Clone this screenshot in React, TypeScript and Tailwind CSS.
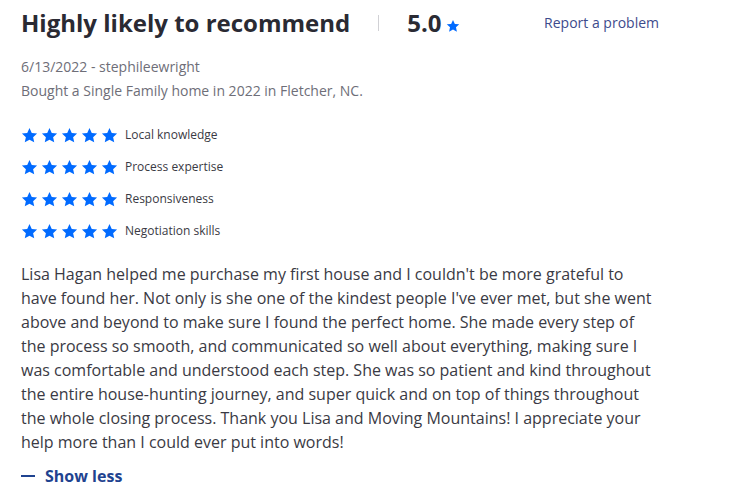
import React from "react";

const Star = ({ className }: { className: string }) => (
  <svg viewBox="0 0 24 24" className={className} fill="currentColor">
    <path d="M12 1.5l3.2 6.9 7.5.8-5.6 5.1 1.6 7.4L12 17.9l-6.7 3.8 1.6-7.4-5.6-5.1 7.5-.8z" />
  </svg>
);

const ratings = [
  "Local knowledge",
  "Process expertise",
  "Responsiveness",
  "Negotiation skills",
];

export default function App() {
  return (
    <div className="w-[754px] h-[494px] bg-white font-['Open_Sans',sans-serif] pl-[21px] pr-[20px] pt-[6px] overflow-hidden">
      <div className="flex items-center h-[34px]">
        <h2 className="text-[24px] font-bold text-[#2a2a33] leading-none">
          Highly likely to recommend
        </h2>
        <div className="w-px h-[16px] bg-[#d1d1d5] ml-[28px] mr-[28px]" />
        <span className="text-[24px] font-bold text-[#2a2a33] leading-none">5.0</span>
        <Star className="w-[14px] h-[14px] text-[#006aff] ml-[4px] mt-[6px]" />
        <a className="ml-auto mr-[75px] text-[14px] text-[#3d4b8c] mt-[-2px]">Report a problem</a>
      </div>

      <div className="mt-[15px] text-[14px] leading-[24px] text-[#6e6e78]">
        <div>6/13/2022 - stephileewright</div>
        <div>Bought a Single Family home in 2022 in Fletcher, NC.</div>
      </div>

      <div className="mt-[22px] flex flex-col gap-[12px]">
        {ratings.map((r) => (
          <div key={r} className="flex items-center h-[20px]">
            <div className="flex gap-[3px]">
              {[0, 1, 2, 3, 4].map((i) => (
                <Star key={i} className="w-[17px] h-[17px] text-[#006aff]" />
              ))}
            </div>
            <span className="ml-[7px] text-[12px] text-[#3a3a44]">{r}</span>
          </div>
        ))}
      </div>

      <p className="mt-[21px] w-[640px] text-[16px] leading-[24px] text-[#3a3a44]">
        Lisa Hagan helped me purchase my first house and I couldn't be more grateful to have found
        her. Not only is she one of the kindest people I've ever met, but she went above and beyond
        to make sure I found the perfect home. She made every step of the process so smooth, and
        communicated so well about everything, making sure I was comfortable and understood each
        step. She was so patient and kind throughout the entire house-hunting journey, and super
        quick and on top of things throughout the whole closing process. Thank you Lisa and Moving
        Mountains! I appreciate your help more than I could ever put into words!
      </p>

      <button className="mt-[10px] flex items-center text-[16px] font-bold text-[#1f4390]">
        <span className="w-[14px] h-[2px] bg-[#1f4390] mr-[10px]" />
        Show less
      </button>
    </div>
  );
}
